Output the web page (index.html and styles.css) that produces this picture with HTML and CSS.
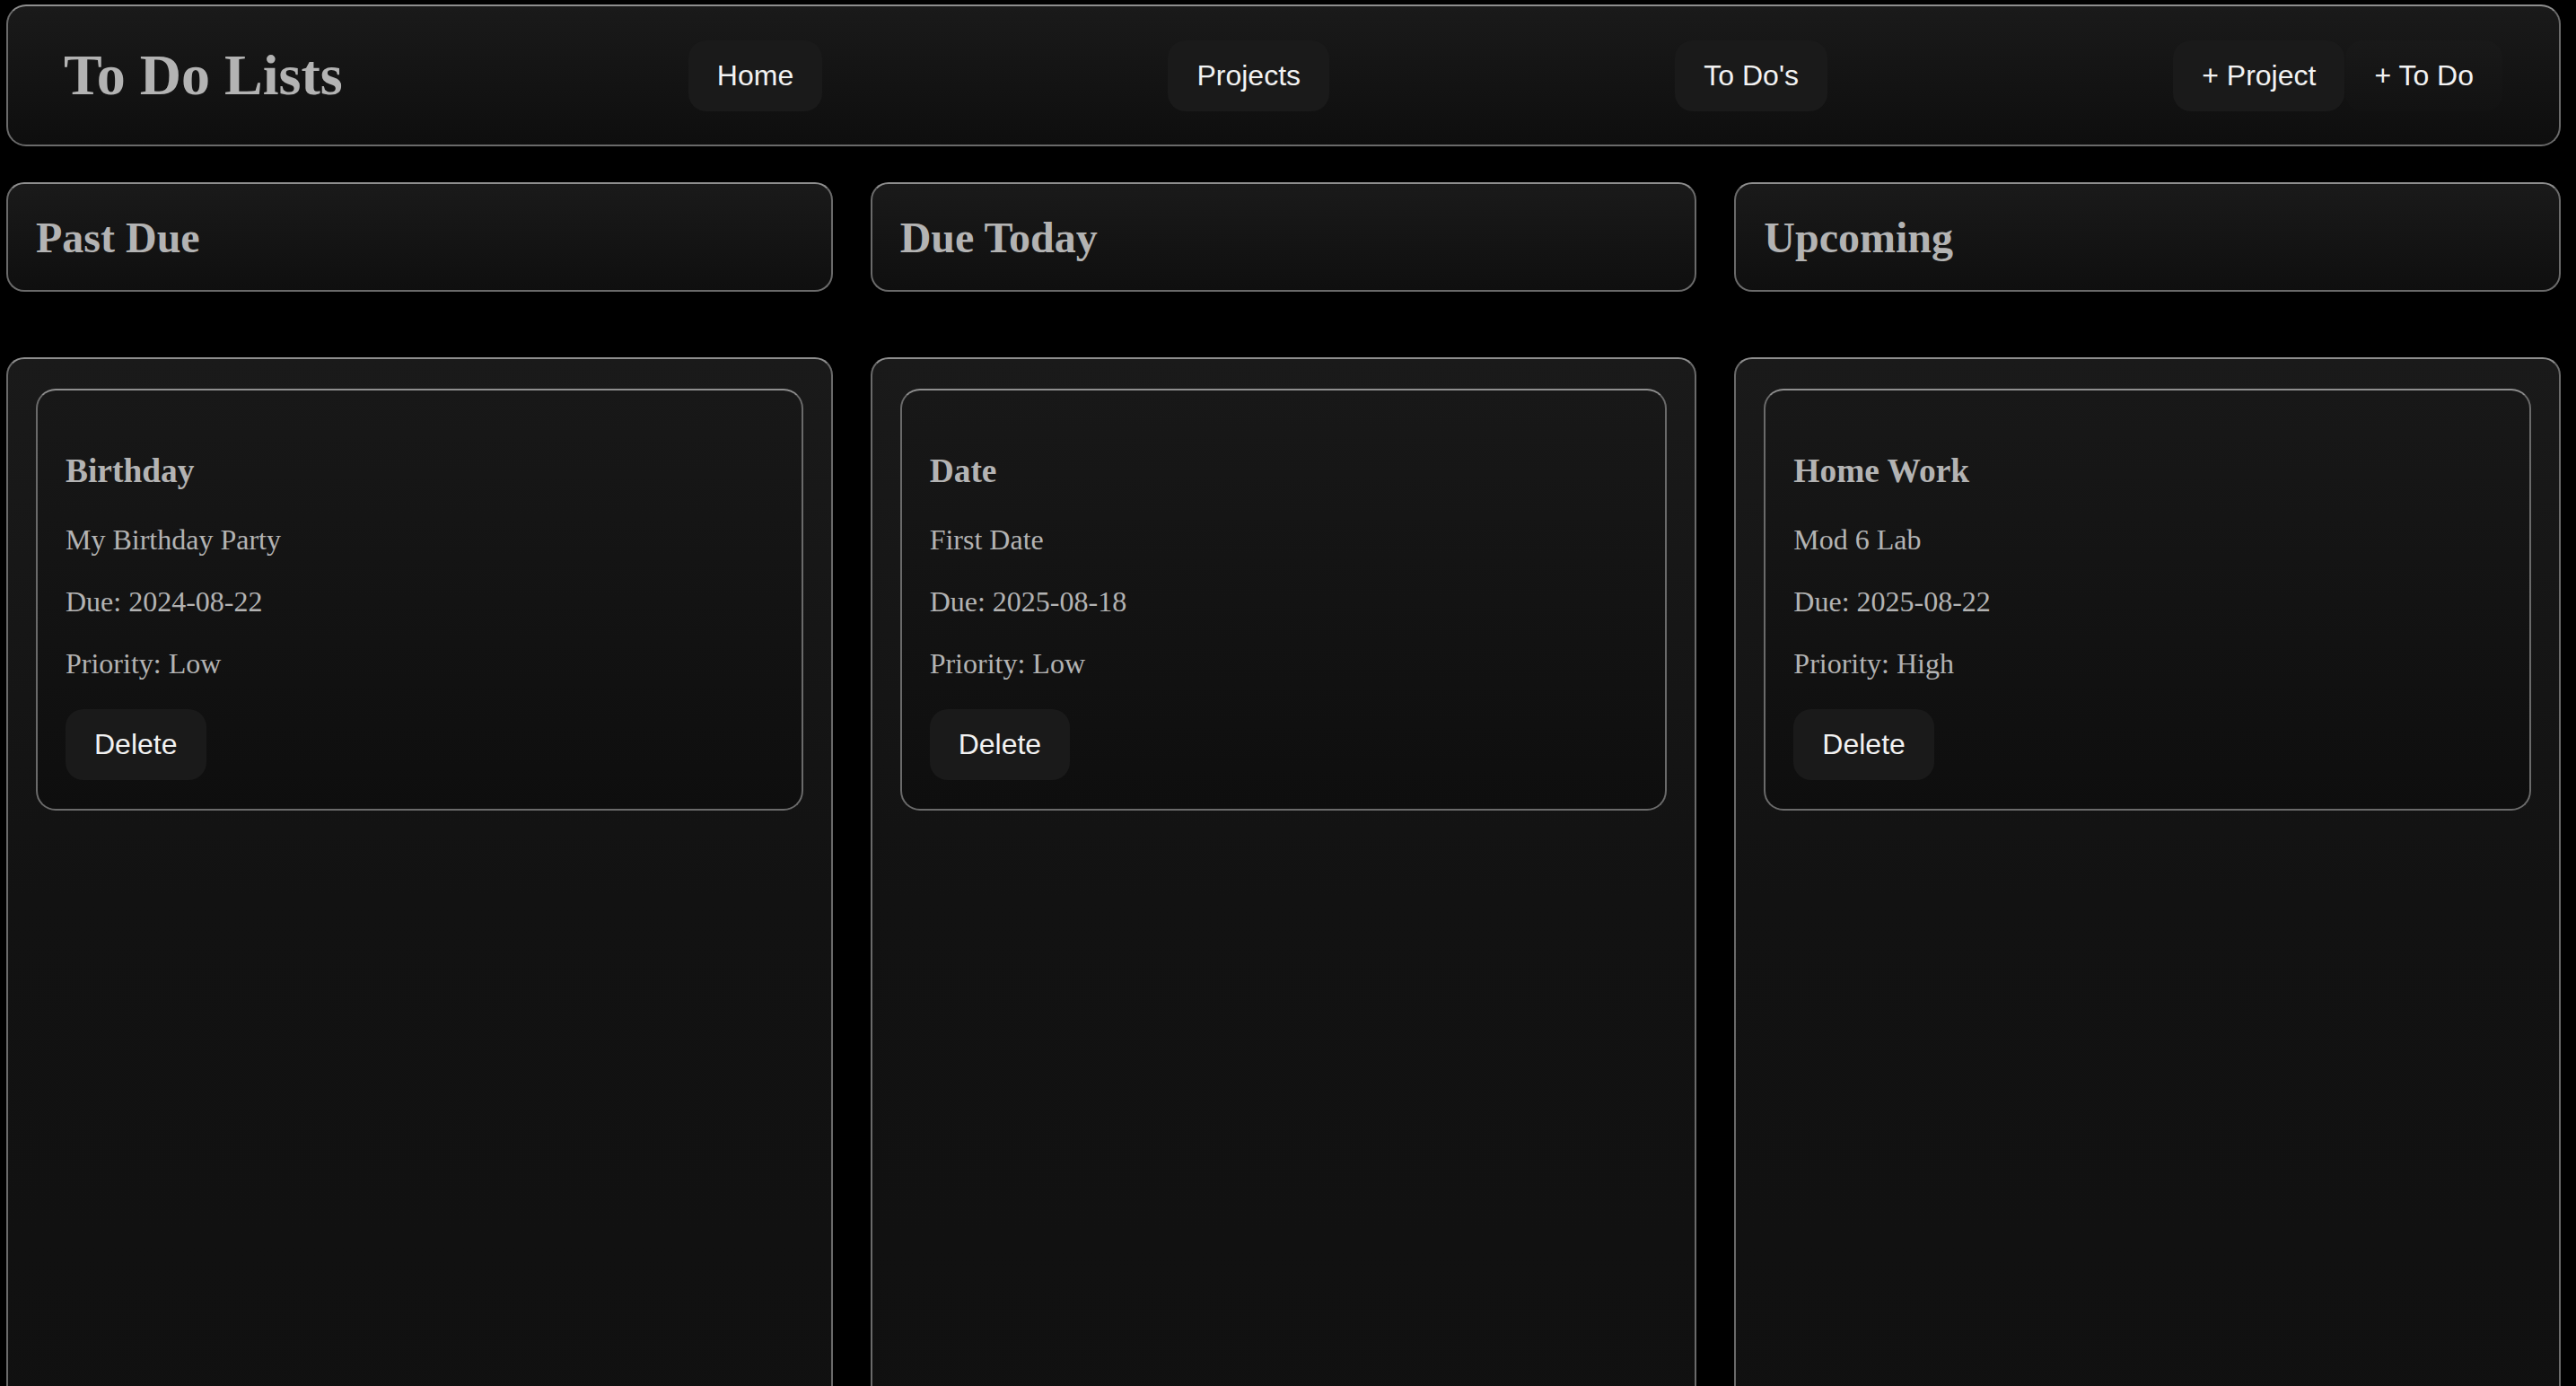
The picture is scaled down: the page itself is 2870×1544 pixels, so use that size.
FILE: index.html
```html
<!DOCTYPE html>
<html lang="en">
<head>
    <meta charset="UTF-8">
    <meta name="viewport" content="width=device-width, initial-scale=1.0">
    <title>To Do Lists</title>
    <link rel="stylesheet" href="styles.css">
</head>
<body>
    <header class="top-bar">
        <h1>To Do Lists</h1>
        <button class="nav-btn">Home</button>
        <button class="nav-btn">Projects</button>
        <button class="nav-btn">To Do's</button>
        <div class="add-group">
            <button class="nav-btn">+ Project</button>
            <button class="nav-btn dim">+ To Do</button>
        </div>
    </header>

    <main class="board">
        <section class="column">
            <div class="column-head"><h2>Past Due</h2></div>
            <div class="column-body">
                <div class="todo-card">
                    <h3>Birthday</h3>
                    <p>My Birthday Party</p>
                    <p>Due: 2024-08-22</p>
                    <p>Priority: Low</p>
                    <button class="delete-btn">Delete</button>
                </div>
            </div>
        </section>

        <section class="column">
            <div class="column-head"><h2>Due Today</h2></div>
            <div class="column-body">
                <div class="todo-card">
                    <h3>Date</h3>
                    <p>First Date</p>
                    <p>Due: 2025-08-18</p>
                    <p>Priority: Low</p>
                    <button class="delete-btn">Delete</button>
                </div>
            </div>
        </section>

        <section class="column">
            <div class="column-head"><h2>Upcoming</h2></div>
            <div class="column-body">
                <div class="todo-card">
                    <h3>Home Work</h3>
                    <p>Mod 6 Lab</p>
                    <p>Due: 2025-08-22</p>
                    <p>Priority: High</p>
                    <button class="delete-btn">Delete</button>
                </div>
            </div>
        </section>
    </main>
</body>
</html>
```

FILE: styles.css
```css
html, body {
    overflow: hidden;
}
body {
    margin: 5px 17px 0 7px;
    background-color: #000;
    color: #b3b3b3;
    font-family: 'Liberation Serif', 'Times New Roman', serif;
    font-size: 32px;
}
.top-bar {
    height: 158px;
    box-sizing: border-box;
    padding: 0 63px 0 62px;
    display: flex;
    align-items: center;
    justify-content: space-between;
    background: linear-gradient(180deg, #1a1a1a 0%, #0e0e0e 100%);
    border: 2px solid #6a6a6a;
    border-top-color: #8e8e8e;
    border-radius: 22px;
}
h1 {
    margin: 0;
    font-size: 64px;
    color: #b3b3b3;
}
.add-group {
    display: flex;
}
.nav-btn, .delete-btn {
    font-family: 'Liberation Sans', Arial, sans-serif;
    font-size: 32px;
    color: #f2f2f2;
    background-color: #1a1a1a;
    border: none;
    border-radius: 20px;
    padding: 21px 32px;
    line-height: normal;
    cursor: pointer;
}
.nav-btn.dim {
    margin-left: 1px;
    background: linear-gradient(180deg, #191919 0%, #121212 100%);
}
.board {
    margin-top: 40px;
    display: grid;
    grid-template-columns: repeat(3, 1fr);
    column-gap: 42px;
}
.column {
    display: flex;
    flex-direction: column;
    gap: 73px;
}
.column-head {
    height: 122px;
    box-sizing: border-box;
    padding: 0 31px;
    display: flex;
    align-items: center;
    background: linear-gradient(180deg, #1a1a1a 0%, #0f0f0f 100%);
    border: 2px solid #6a6a6a;
    border-top-color: #8e8e8e;
    border-radius: 20px;
}
h2 {
    margin: 0;
    font-size: 48px;
}
.column-body {
    min-height: 1300px;
    padding: 33px 31px;
    background: linear-gradient(180deg, #1a1a1a 0px, #121212 600px, #101010 100%);
    border: 2px solid #6a6a6a;
    border-top-color: #8e8e8e;
    border-radius: 20px;
}
.todo-card {
    padding: 32px 31px;
    background: linear-gradient(180deg, #181818 0%, #0e0e0e 100%);
    border: 2px solid #6a6a6a;
    border-top-color: #8e8e8e;
    border-radius: 22px;
}
h3 {
    font-size: 37.44px;
    margin: 36px 0 37px;
}
.todo-card p {
    margin: 0 0 32px;
}
.delete-btn {
    padding: 21px 32px;
}
```
